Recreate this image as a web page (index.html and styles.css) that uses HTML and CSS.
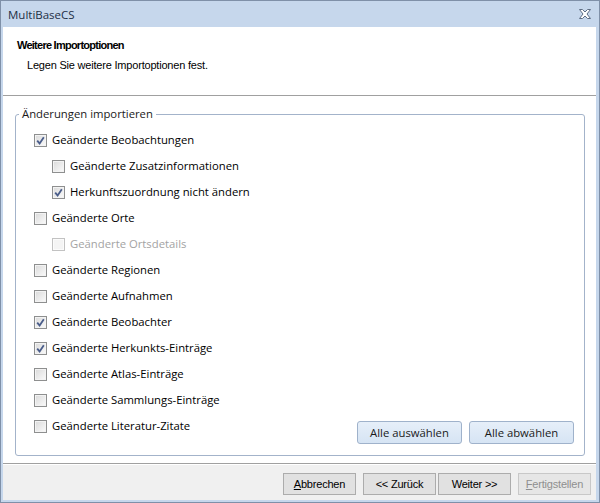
FILE: index.html
```html
<!DOCTYPE html>
<html lang="de">
<head>
<meta charset="utf-8">
<title>MultiBaseCS</title>
<link rel="stylesheet" href="styles.css">
</head>
<body>
<div class="window">
  <div class="titlebar">
    <span class="title">MultiBaseCS</span>
    <svg class="close" width="12" height="10" viewBox="0 0 12 10"><path d="M0.5 0.5 H3.5 L6 3 L8.5 0.5 H11.5 L8 5 L11.5 9.5 H8.5 L6 7 L3.5 9.5 H0.5 L4 5 Z" fill="#fff" stroke="#5f6e84" stroke-width="1"/></svg>
  </div>
  <div class="content">
    <div class="header">
      <div class="h-title">Weitere Importoptionen</div>
      <div class="h-sub">Legen Sie weitere Importoptionen fest.</div>
    </div>
    <div class="body">
      <div class="group">
        <div class="legend">Änderungen importieren</div>
        <div class="group-inner">
          <ul class="options">
            <li class="opt"><span class="cb"><svg viewBox="0 0 9 9" width="9" height="9"><path d="M1.2 4.6 L3.6 7.4 L7.8 1.2" fill="none" stroke="#4a5d8a" stroke-width="1.8"/></svg></span>Geänderte Beobachtungen</li>
            <li class="opt sub"><span class="cb"></span>Geänderte Zusatzinformationen</li>
            <li class="opt sub"><span class="cb"><svg viewBox="0 0 9 9" width="9" height="9"><path d="M1.2 4.6 L3.6 7.4 L7.8 1.2" fill="none" stroke="#4a5d8a" stroke-width="1.8"/></svg></span>Herkunftszuordnung nicht ändern</li>
            <li class="opt"><span class="cb"></span>Geänderte Orte</li>
            <li class="opt sub disabled"><span class="cb"></span>Geänderte Ortsdetails</li>
            <li class="opt"><span class="cb"></span>Geänderte Regionen</li>
            <li class="opt"><span class="cb"></span>Geänderte Aufnahmen</li>
            <li class="opt"><span class="cb"><svg viewBox="0 0 9 9" width="9" height="9"><path d="M1.2 4.6 L3.6 7.4 L7.8 1.2" fill="none" stroke="#4a5d8a" stroke-width="1.8"/></svg></span>Geänderte Beobachter</li>
            <li class="opt"><span class="cb"><svg viewBox="0 0 9 9" width="9" height="9"><path d="M1.2 4.6 L3.6 7.4 L7.8 1.2" fill="none" stroke="#4a5d8a" stroke-width="1.8"/></svg></span>Geänderte Herkunkts-Einträge</li>
            <li class="opt"><span class="cb"></span>Geänderte Atlas-Einträge</li>
            <li class="opt"><span class="cb"></span>Geänderte Sammlungs-Einträge</li>
            <li class="opt"><span class="cb"></span>Geänderte Literatur-Zitate</li>
          </ul>
          <div class="sel-buttons">
            <button class="sel-btn">Alle auswählen</button>
            <button class="sel-btn">Alle abwählen</button>
          </div>
        </div>
      </div>
    </div>
    <div class="footer">
      <button class="btn"><u>A</u>bbrechen</button>
      <button class="btn gap-l">&lt;&lt; Zurück</button>
      <button class="btn gap-s">Weiter &gt;&gt;</button>
      <button class="btn gap-l disabled-btn"><u>F</u>ertigstellen</button>
    </div>
  </div>
</div>
</body>
</html>
```

FILE: styles.css
```css
* { box-sizing: border-box; }
html, body { margin: 0; padding: 0; background: #ffffff; }
body { width: 600px; height: 503px; overflow: hidden; }

.window {
  width: 600px;
  height: 503px;
  border: 1px solid #7f90a8;
  background: #c6d7ec;
  padding: 0 3px 2px 2px;
  display: flex;
  flex-direction: column;
}

.titlebar {
  height: 26px;
  display: flex;
  align-items: center;
  justify-content: space-between;
  padding: 0 5px 0 5px;
  flex: none;
}
.title {
  font-family: "Open Sans", "Noto Sans", sans-serif;
  font-size: 11.5px;
  color: #1e2f45;
}
.close { display: block; margin-top: -1px; }

.content {
  flex: 1;
  background: #ffffff;
  display: flex;
  flex-direction: column;
}

.header {
  height: 69px;
  border-bottom: 1px solid #a0a0a0;
  padding: 10px 0 0 14px;
  font-family: "Liberation Sans", Arial, sans-serif;
  font-size: 11px;
  color: #000;
  flex: none;
}
.h-title { font-weight: bold; line-height: 16px; letter-spacing: -0.75px; }
.h-sub { line-height: 16px; margin-top: 4px; padding-left: 10px; letter-spacing: -0.2px; }

.body {
  height: 367px;
  padding: 18px 11px 0 12px;
  flex: none;
}

.group {
  border: 1px solid #a3b3ca;
  border-radius: 3px;
  height: 342px;
  padding: 0 10px 11px 18px;
  display: flex;
  flex-direction: column;
  font-family: "Open Sans", "Noto Sans", sans-serif;
  font-size: 11.3px;
  color: #000;
}
.legend {
  margin: -9px 0 0 -15px;
  padding: 0 3px;
  background: #fff;
  width: max-content;
  line-height: 16px;
  color: #1a1a1a;
}

.group-inner {
  flex: 1;
  display: flex;
  justify-content: space-between;
  align-items: flex-end;
}

.options {
  list-style: none;
  margin: 0 0 5px 0;
  padding: 0;
}
.opt {
  height: 26px;
  display: flex;
  align-items: center;
  line-height: 26px;
  white-space: nowrap;
}
.opt.sub { padding-left: 18px; }
.opt.disabled { color: #a3a3a3; }

.cb {
  width: 13px;
  height: 13px;
  border: 1px solid #8e8f8f;
  background: linear-gradient(135deg, #d9d9d9 0%, #ececec 55%, #fbfbfb 100%);
  box-shadow: inset 0 0 0 1px #f3f3f3;
  margin-right: 5px;
  display: flex;
  align-items: center;
  justify-content: center;
  flex: none;
}
.cb svg { display: block; }
.disabled .cb {
  border-color: #c2c2c2;
  background: #f4f4f4;
  box-shadow: inset 0 0 0 1px #fbfbfb;
}

.sel-buttons { display: flex; gap: 7px; }
.sel-btn {
  width: 105px;
  height: 23px;
  border: 1px solid #9fb2cb;
  border-radius: 3px;
  background: linear-gradient(#e6eff9, #d6e4f4);
  font-family: "Open Sans", "Noto Sans", sans-serif;
  font-size: 11.3px;
  color: #1a1a1a;
  padding: 0;
  margin: 0;
}

.footer {
  flex: 1;
  background: #f0f0f0;
  border-top: 1px solid #a0a0a0;
  box-shadow: inset 0 1px 0 #ffffff;
  display: flex;
  justify-content: flex-end;
  align-items: flex-start;
  padding: 9px 5px 0 0;
}
.btn {
  width: 73px;
  height: 22px;
  border: 1px solid #acacac;
  background: #e1e1e1;
  font-family: "Liberation Sans", Arial, sans-serif;
  font-size: 11px;
  letter-spacing: -0.2px;
  color: #000;
  padding: 0;
  margin: 0;
}
.btn.gap-l { margin-left: 7px; }
.btn.gap-s { margin-left: 2px; }
.btn.disabled-btn {
  background: #e6e6e6;
  border-color: #c8c8c8;
  color: #8f8f8f;
}
```
